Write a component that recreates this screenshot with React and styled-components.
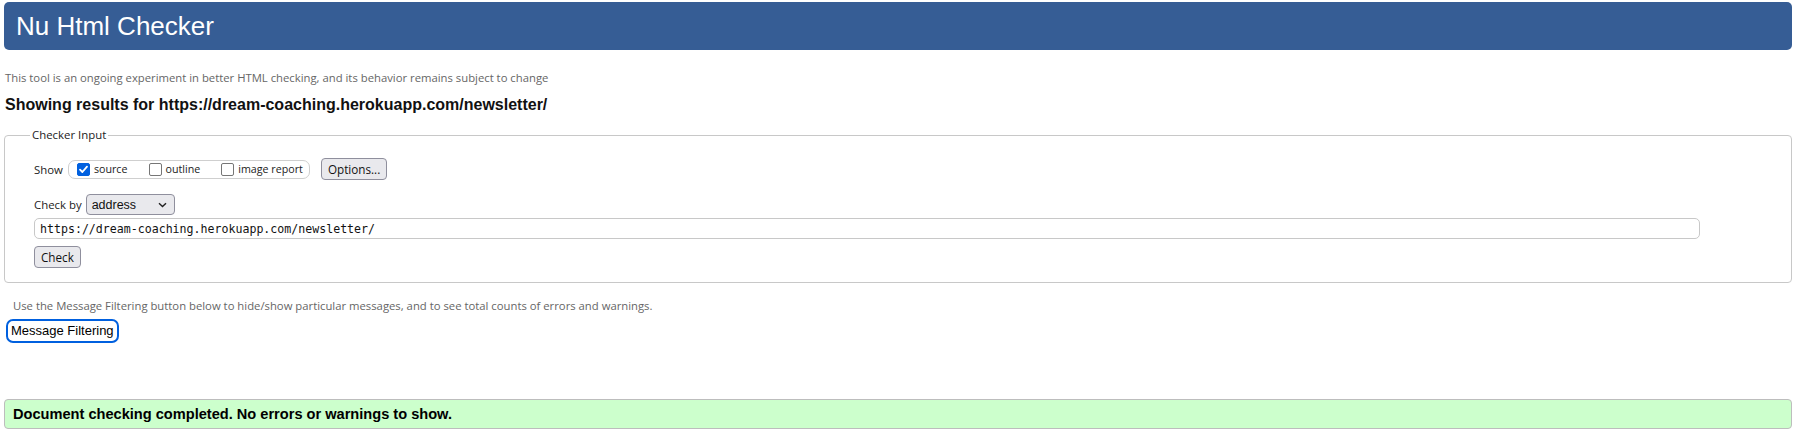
import styled, { createGlobalStyle } from "styled-components";

const GlobalStyle = createGlobalStyle`
  html, body {
    margin: 0;
    padding: 0;
    background: #fff;
  }
  body {
    font-family: "Open Sans", "Noto Sans", sans-serif;
    color: #222;
  }
`;

const Page = styled.div`
  display: flex;
  flex-direction: column;
  padding: 2px 10px 0 4px;
  width: 1788px;
`;

const Header = styled.header`
  height: 48px;
  background: #365d95;
  border-radius: 5px;
  display: flex;
  align-items: center;
  padding-left: 12px;
`;

const Title = styled.h1`
  margin: 0;
  font-family: "Liberation Sans", Arial, sans-serif;
  font-weight: 400;
  font-size: 26px;
  line-height: 48px;
  color: #fff;
`;

const Note = styled.p`
  margin: ${(props) => props.$top}px 0 0 ${(props) => props.$indent || 1}px;
  font-size: 11.3px;
  line-height: 15px;
  color: #666;
`;

const ResultsHeading = styled.h2`
  margin: 10px 0 0 1px;
  font-family: "Liberation Sans", Arial, sans-serif;
  font-weight: 700;
  font-size: 16px;
  line-height: 20px;
  color: #111;
`;

const InputFieldset = styled.fieldset`
  margin: 12px 0 0;
  padding: 15px 0 14px 29px;
  border: 1px solid #c8c8c8;
  border-radius: 4px;
  display: flex;
  flex-direction: column;
  align-items: flex-start;
  min-width: 0;
`;

const Legend = styled.legend`
  margin-left: -4px;
  padding: 0 2px;
  font-size: 11.4px;
  line-height: 16px;
  color: #222;
`;

const Row = styled.div`
  display: flex;
  align-items: center;
  height: ${(props) => props.$height}px;
  margin-top: ${(props) => props.$top || 0}px;
`;

const Label = styled.span`
  font-size: 11.4px;
  color: #222;
  margin-right: ${(props) => props.$gap}px;
`;

const CheckGroup = styled.div`
  display: flex;
  align-items: center;
  gap: 21px;
  height: 17px;
  padding: 0 6px 0 8px;
  border: 1px solid #cfcfcf;
  border-radius: 7px;
`;

const CheckItem = styled.label`
  display: flex;
  align-items: center;
  gap: 4px;
  font-size: 10.7px;
  color: #222;
`;

const Box = styled.span`
  width: 13px;
  height: 13px;
  box-sizing: border-box;
  border-radius: 2px;
  display: flex;
  align-items: center;
  justify-content: center;
  background: ${(props) => (props.$checked ? "#0060df" : "#fff")};
  border: 1px solid ${(props) => (props.$checked ? "#0060df" : "#767676")};
`;

const Button = styled.button`
  height: 22px;
  box-sizing: border-box;
  margin: ${(props) => props.$margin || "0"};
  padding: 0 6px;
  background: #e9e9ed;
  border: 1px solid #8f8f9d;
  border-radius: 4px;
  font-family: "Open Sans", "Noto Sans", sans-serif;
  font-size: 11.7px;
  color: #111;
  line-height: 20px;
`;

const Select = styled.div`
  width: 89px;
  height: 21px;
  box-sizing: border-box;
  display: flex;
  align-items: center;
  justify-content: space-between;
  padding: 0 7px 0 5px;
  background: #e9e9ed;
  border: 1px solid #8f8f9d;
  border-radius: 4px;
  font-family: "Liberation Sans", Arial, sans-serif;
  font-size: 12.5px;
  color: #111;
`;

const UrlField = styled.div`
  width: 1666px;
  height: 21px;
  box-sizing: border-box;
  margin-top: 3px;
  padding: 0 5px;
  display: flex;
  align-items: center;
  border: 1px solid #c8c8c8;
  border-radius: 5px;
  font-family: "DejaVu Sans Mono", "Liberation Mono", monospace;
  font-size: 11.6px;
  color: #111;
`;

const FilterButton = styled.button`
  align-self: flex-start;
  height: 24px;
  box-sizing: border-box;
  margin: 6px 0 0 2px;
  padding: 0 3px;
  background: #fff;
  border: 2px solid #0060df;
  border-radius: 7px;
  font-family: "Liberation Sans", Arial, sans-serif;
  font-size: 13px;
  line-height: 20px;
  color: #000;
`;

const SuccessBox = styled.div`
  margin-top: 56px;
  height: 30px;
  box-sizing: border-box;
  padding: 1px 8px 0;
  background: #ccffcc;
  border: 1px solid #bdbdbd;
  border-radius: 4px;
  font-family: "Liberation Sans", Arial, sans-serif;
  font-weight: 700;
  font-size: 14.6px;
  line-height: 27px;
  color: #000;
`;

const CheckMark = () => (
  <svg width="11" height="11" viewBox="0 0 11 11">
    <path d="M2 5.6 L4.4 8 L9 2.6" fill="none" stroke="#fff" strokeWidth="1.8" strokeLinecap="round" strokeLinejoin="round" />
  </svg>
);

const Chevron = () => (
  <svg width="9" height="6" viewBox="0 0 9 6">
    <path d="M1 1.2 L4.5 4.6 L8 1.2" fill="none" stroke="#222" strokeWidth="1.4" />
  </svg>
);

const checks = [
  { label: "source", checked: true },
  { label: "outline", checked: false },
  { label: "image report", checked: false },
];

export default function App() {
  return (
    <>
      <GlobalStyle />
      <Page>
        <Header>
          <Title>Nu Html Checker</Title>
        </Header>
        <Note $top={20}>
          This tool is an ongoing experiment in better HTML checking, and its behavior remains subject to change
        </Note>
        <ResultsHeading>Showing results for https://dream-coaching.herokuapp.com/newsletter/</ResultsHeading>
        <InputFieldset>
          <Legend>Checker Input</Legend>
          <Row $height={22}>
            <Label $gap={5}>Show</Label>
            <CheckGroup>
              {checks.map((c) => (
                <CheckItem key={c.label}>
                  <Box $checked={c.checked}>{c.checked && <CheckMark />}</Box>
                  {c.label}
                </CheckItem>
              ))}
            </CheckGroup>
            <Button $margin="0 0 0 11px">Options...</Button>
          </Row>
          <Row $height={21} $top={14}>
            <Label $gap={4}>Check by</Label>
            <Select>
              address
              <Chevron />
            </Select>
          </Row>
          <UrlField>https://dream-coaching.herokuapp.com/newsletter/</UrlField>
          <Button $margin="7px 0 0">Check</Button>
        </InputFieldset>
        <Note $top={15} $indent={9}>
          Use the Message Filtering button below to hide/show particular messages, and to see total counts of errors and warnings.
        </Note>
        <FilterButton>Message Filtering</FilterButton>
        <SuccessBox>Document checking completed. No errors or warnings to show.</SuccessBox>
      </Page>
    </>
  );
}
